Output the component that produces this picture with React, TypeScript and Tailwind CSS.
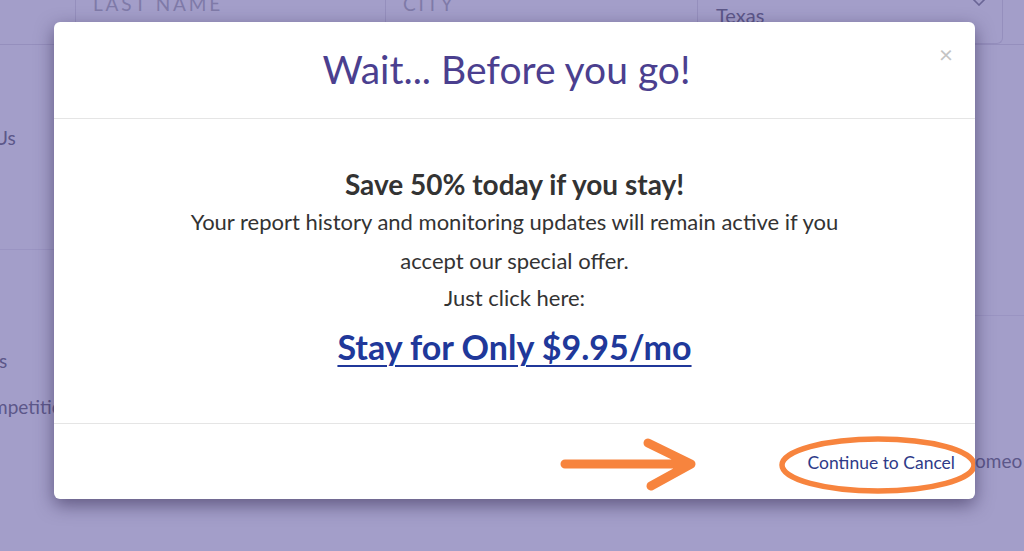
const lato = { fontFamily: 'Lato, "Open Sans", sans-serif' };

const Backdrop = () => (
  <div className="absolute inset-0 bg-[#a39ec9] text-[#5c5789]" style={lato}>
    {/* top form row */}
    <div className="flex h-[45px] border-b border-[#958fbd]">
      <div className="w-[75px] shrink-0" />
      <div className="w-[310px] shrink-0 border-l border-[#958fbd] pl-[17px] -mt-[10px] text-[19px] tracking-[0.15em] text-[#7f7aa8]">
        LAST NAME
      </div>
      <div className="w-[312px] shrink-0 border-l border-[#958fbd] pl-[17px] -mt-[10px] text-[19px] tracking-[0.15em] text-[#7f7aa8]">
        CITY
      </div>
      <div className="relative w-[306px] shrink-0 rounded-b-md border border-t-0 border-[#958fbd] pl-[18px] text-[20px] text-[#5c5789]">
        Texas
        <svg className="absolute right-[14px] -top-[4px]" width="18" height="10" viewBox="0 0 18 10" fill="none">
          <path d="M1 1l8 8 8-8" stroke="#6a6596" strokeWidth="1.6" />
        </svg>
      </div>
    </div>

    <div className="flex">
      {/* sidebar */}
      <div className="w-[107px] shrink-0 border-r border-[#9a94c2]">
        <div className="h-[205px] border-b border-[#9a94c2] pt-[79px] -ml-[6px] text-[19px]">Us</div>
        <div className="pt-[88px] text-[19px] leading-[46px]">
          <div className="-ml-[1px]">s</div>
          <div className="-ml-[8px]">mpetitio</div>
        </div>
      </div>
      <div className="flex-1" />
      <div className="w-[49px] shrink-0">
        <div className="h-[271px] border-b border-[#9a94c2]" />
        <div className="pt-[131px] text-[19px] whitespace-nowrap">omeo</div>
      </div>
    </div>
  </div>
);

const Modal = () => (
  <div
    className="absolute left-[54px] top-[22px] w-[921px] h-[477px] rounded-[6px] bg-white shadow-[0_6px_18px_rgba(40,30,70,0.55)] flex flex-col"
    style={lato}
  >
    <div className="relative h-[97px] shrink-0 border-b border-[#e5e5e5] flex items-center justify-center pr-[16px]">
      <h1 className="text-[39px] text-[#4b3f8f] pb-[2px]">Wait... Before you go!</h1>
      <span className="absolute right-[22px] top-[20px] text-[24px] text-[#c4c4c4] leading-none">×</span>
    </div>

    <div className="h-[305px] shrink-0 border-b border-[#e5e5e5] flex flex-col items-center pt-[49px] text-center text-[#333333]">
      <p className="text-[28px] font-bold leading-[32px]">Save 50% today if you stay!</p>
      <p className="mt-[2px] max-w-[675px] text-[22px] leading-[39px]">
        Your report history and monitoring updates will remain active if you accept our special offer.
      </p>
      <p className="text-[22px] leading-[36px]">Just click here:</p>
      <a className="mt-[10px] text-[34px] font-bold leading-[42px] text-[#20389a] underline underline-offset-[5px] decoration-2">
        Stay for Only $9.95/mo
      </a>
    </div>

    <div className="relative flex-1 flex items-center justify-end pr-[20px]">
      <span className="text-[17.5px] text-[#2e3a88] pt-[3px]">Continue to Cancel</span>
      {/* annotation: arrow + circle */}
      <svg className="absolute left-0 top-0 pointer-events-none" width="921" height="75" viewBox="0 0 921 75" fill="none">
        <path d="M511 40H634M594 19l43 21-40 22" stroke="#f7843e" strokeWidth="9" strokeLinecap="round" strokeLinejoin="round" />
        <ellipse cx="824" cy="41" rx="96" ry="26" stroke="#f7843e" strokeWidth="5.5" />
      </svg>
    </div>
  </div>
);

export default function App() {
  return (
    <div className="relative w-[1024px] h-[551px] overflow-hidden">
      <Backdrop />
      <Modal />
    </div>
  );
}
